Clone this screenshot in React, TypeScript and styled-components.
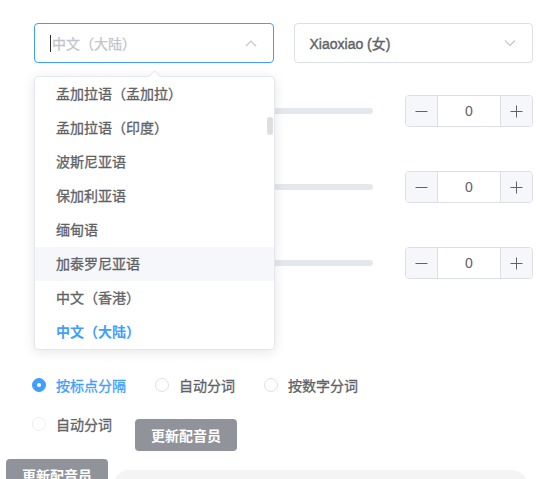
import React from "react";
import styled, { createGlobalStyle } from "styled-components";

const GlobalStyle = createGlobalStyle`
  html, body {
    margin: 0;
    padding: 0;
    background: #ffffff;
  }
  body {
    font-family: "Liberation Sans", "Noto Sans CJK SC", sans-serif;
    color: #606266;
  }
  * {
    box-sizing: border-box;
  }
`;

const Page = styled.div`
  width: 552px;
  height: 479px;
  overflow: hidden;
`;

const Form = styled.div`
  padding: 23px 0 0 34px;
  width: 533px;
`;

const SelectRow = styled.div`
  display: flex;
  gap: 20px;
`;

const SelectWrap = styled.div`
  position: relative;
  width: 240px;
`;

const SelectBox = styled.div<{ $focused?: boolean }>`
  height: 40px;
  border: 1px solid ${(p) => (p.$focused ? "#409eff" : "#dcdfe6")};
  border-radius: 4px;
  display: flex;
  align-items: center;
  padding: 0 16px 0 15px;
  font-size: 14px;
`;

const SelectText = styled.span<{ $placeholder?: boolean }>`
  flex: 1;
  color: ${(p) => (p.$placeholder ? "#c0c4cc" : "#606266")};
  -webkit-text-stroke: ${(p) => (p.$placeholder ? "0.25px" : "0.4px")} currentColor;
  display: flex;
  align-items: center;
`;

const Caret = styled.span`
  width: 1px;
  height: 17px;
  background: #303133;
  margin-right: 1px;
`;

const Dropdown = styled.div`
  position: absolute;
  top: 53px;
  left: 0;
  width: 241px;
  height: 274px;
  background: #ffffff;
  border: 1px solid #e4e7ed;
  border-radius: 4px;
  box-shadow: 0 2px 12px 0 rgba(0, 0, 0, 0.1);
  z-index: 10;

  &::before {
    content: "";
    position: absolute;
    top: -5px;
    left: 115px;
    width: 8px;
    height: 8px;
    background: #ffffff;
    border-top: 1px solid #e4e7ed;
    border-left: 1px solid #e4e7ed;
    transform: rotate(45deg);
  }
`;

const OptionList = styled.ul`
  list-style: none;
  margin: 0;
  padding: 0;
  height: 272px;
  overflow: hidden;
  border-radius: 4px;
`;

const Option = styled.li<{ $hover?: boolean; $selected?: boolean }>`
  height: 34px;
  line-height: 34px;
  padding: 0 20px 0 21px;
  font-size: 14px;
  font-weight: ${(p) => (p.$selected ? 700 : 400)};
  -webkit-text-stroke: ${(p) => (p.$selected ? "0" : "0.3px")} currentColor;
  color: ${(p) => (p.$selected ? "#409eff" : "#606266")};
  background: ${(p) => (p.$hover ? "#f5f7fa" : "transparent")};
  white-space: nowrap;
`;

const ScrollThumb = styled.div`
  position: absolute;
  right: 1px;
  top: 40px;
  width: 6px;
  height: 18px;
  border-radius: 3px;
  background: rgba(144, 147, 153, 0.3);
`;

const SliderList = styled.div`
  display: flex;
  flex-direction: column;
  gap: 44px;
  padding-top: 32px;
`;

const SliderRow = styled.div`
  display: flex;
  align-items: center;
  height: 32px;
`;

const SliderRail = styled.div`
  flex: 1;
  height: 6px;
  border-radius: 3px;
  background: #e4e7ed;
  margin-right: 32px;
`;

const NumberBox = styled.div`
  width: 128px;
  height: 32px;
  border: 1px solid #dcdfe6;
  border-radius: 4px;
  display: flex;
  overflow: hidden;
`;

const StepButton = styled.div<{ $side: "left" | "right" }>`
  width: 32px;
  background: #f5f7fa;
  display: flex;
  align-items: center;
  justify-content: center;
  border-${(p) => (p.$side === "left" ? "right" : "left")}: 1px solid #dcdfe6;
`;

const NumberValue = styled.div`
  flex: 1;
  display: flex;
  align-items: center;
  justify-content: center;
  font-size: 14px;
  color: #606266;
`;

const RadioRow = styled.div<{ $gap: number }>`
  display: flex;
  align-items: flex-start;
  margin: ${(p) => p.$gap}px 0 0 -2px;
`;

const RadioItem = styled.label<{ $checked?: boolean; $space?: number }>`
  display: inline-flex;
  align-items: center;
  height: 14px;
  margin-right: ${(p) => p.$space ?? 29}px;
  font-size: 14px;
  -webkit-text-stroke: 0.3px currentColor;
  color: ${(p) => (p.$checked ? "#409eff" : "#606266")};
`;

const RadioDot = styled.span<{ $checked?: boolean; $faint?: boolean }>`
  position: relative;
  width: 14px;
  height: 14px;
  border-radius: 50%;
  margin-right: 10px;
  -webkit-text-stroke: 0;
  border: 1px solid
    ${(p) => (p.$checked ? "#409eff" : p.$faint ? "#eeeff3" : "#dcdfe6")};
  background: ${(p) => (p.$checked ? "#409eff" : "#ffffff")};

  &::after {
    content: "";
    display: ${(p) => (p.$checked ? "block" : "none")};
    position: absolute;
    left: 50%;
    top: 50%;
    width: 4px;
    height: 4px;
    margin: -2px 0 0 -2px;
    border-radius: 50%;
    background: #ffffff;
  }
`;

const GreyButton = styled.button<{ $offset?: number }>`
  height: 32px;
  padding: 0 16px;
  margin-top: ${(p) => p.$offset ?? 0}px;
  border: none;
  border-radius: 4px;
  background: #909399;
  color: #ffffff;
  font-family: inherit;
  font-size: 14px;
  font-weight: 700;
  white-space: nowrap;
  flex-shrink: 0;
`;

const BottomRow = styled.div`
  display: flex;
  align-items: flex-start;
  padding-left: 6px;
  margin-top: 8px;
`;

const GreyPanel = styled.div`
  width: 415px;
  height: 40px;
  margin: 11px 0 0 5px;
  border-radius: 16px;
  background: #f4f4f5;
`;

const Chevron = ({ up }: { up?: boolean }) => (
  <svg width="12" height="8" viewBox="0 0 12 8">
    <path
      d={up ? "M1 7 L6 2 L11 7" : "M1 1.5 L6 6.5 L11 1.5"}
      fill="none"
      stroke="#c0c4cc"
      strokeWidth="1.2"
    />
  </svg>
);

const Minus = () => (
  <svg width="13" height="13" viewBox="0 0 13 13">
    <path d="M0.5 6.5 H12.5" stroke="#606266" strokeWidth="1" />
  </svg>
);

const Plus = () => (
  <svg width="13" height="13" viewBox="0 0 13 13">
    <path d="M0.5 6.5 H12.5 M6.5 0.5 V12.5" stroke="#606266" strokeWidth="1" />
  </svg>
);

const languages = [
  "孟加拉语（孟加拉）",
  "孟加拉语（印度）",
  "波斯尼亚语",
  "保加利亚语",
  "缅甸语",
  "加泰罗尼亚语",
  "中文（香港）",
  "中文（大陆）",
];

export default function App() {
  return (
    <Page>
      <GlobalStyle />
      <Form>
        <SelectRow>
          <SelectWrap>
            <SelectBox $focused>
              <SelectText $placeholder>
                <Caret />
                中文（大陆）
              </SelectText>
              <Chevron up />
            </SelectBox>
            <Dropdown>
              <OptionList>
                {languages.map((lang, i) => (
                  <Option key={lang} $hover={i === 5} $selected={i === 7}>
                    {lang}
                  </Option>
                ))}
              </OptionList>
              <ScrollThumb />
            </Dropdown>
          </SelectWrap>
          <SelectWrap>
            <SelectBox>
              <SelectText>Xiaoxiao (女)</SelectText>
              <Chevron />
            </SelectBox>
          </SelectWrap>
        </SelectRow>

        <SliderList>
          {[0, 1, 2].map((n) => (
            <SliderRow key={n}>
              <SliderRail />
              <NumberBox>
                <StepButton $side="left">
                  <Minus />
                </StepButton>
                <NumberValue>0</NumberValue>
                <StepButton $side="right">
                  <Plus />
                </StepButton>
              </NumberBox>
            </SliderRow>
          ))}
        </SliderList>

        <RadioRow $gap={99}>
          <RadioItem $checked>
            <RadioDot $checked />
            按标点分隔
          </RadioItem>
          <RadioItem>
            <RadioDot />
            自动分词
          </RadioItem>
          <RadioItem>
            <RadioDot />
            按数字分词
          </RadioItem>
        </RadioRow>

        <RadioRow $gap={25}>
          <RadioItem $space={23}>
            <RadioDot $faint />
            自动分词
          </RadioItem>
          <GreyButton $offset={2}>更新配音员</GreyButton>
        </RadioRow>
      </Form>

      <BottomRow>
        <GreyButton>更新配音员</GreyButton>
        <GreyPanel />
      </BottomRow>
    </Page>
  );
}
